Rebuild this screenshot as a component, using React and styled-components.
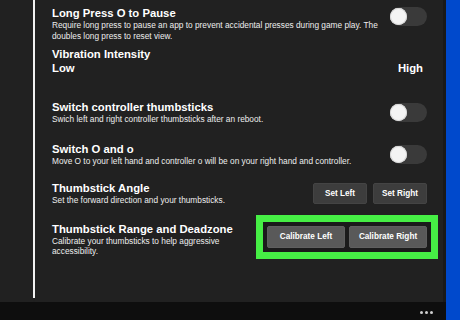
import React from 'react'
import styled, { createGlobalStyle } from 'styled-components'

const Global = createGlobalStyle`
    html, body {
        margin: 0;
        padding: 0;
        background: #202020;
    }
    body {
        font-family: "Liberation Sans", Arial, sans-serif;
        color: #fff;
    }
`

const Screen = styled.div`
    width: 460px;
    height: 320px;
    display: flex;
    overflow: hidden;
`

const Main = styled.div`
    flex: 1;
    display: flex;
    flex-direction: column;
`

const Body = styled.div`
    flex: 1;
    display: flex;
    min-height: 0;
`

const Gutter = styled.div`
    width: 33px;
    background: #212121;
`

const Rule = styled.div`
    width: 2px;
    margin-bottom: 4px;
    background: #f2f2f2;
`

const Panel = styled.div`
    flex: 1;
    background: #212121;
    padding: 0 16px 0 17px;
    display: flex;
    flex-direction: column;
`

const Edge = styled.div`
    width: 3px;
    background: #191919;
`

const BottomBar = styled.div`
    height: 18px;
    background: #0e0e0e;
    display: flex;
    justify-content: flex-end;
    align-items: center;
    gap: 2px;
    padding: 3px 13px 0 0;
    box-sizing: border-box;
`

const Dot = styled.span`
    width: 3px;
    height: 3px;
    border-radius: 50%;
    background: #cfcfcf;
`

const Blue = styled.div`
    width: 14px;
    background: #0049cc;
`

const Row = styled.div`
    display: flex;
    justify-content: space-between;
    align-items: ${p => p.align || 'center'};
    margin-top: ${p => p.top}px;
`

const Text = styled.div`
    display: flex;
    flex-direction: column;
    margin-top: ${p => p.offset || 0}px;
`

const Title = styled.div`
    font-size: 11.3px;
    font-weight: 700;
    line-height: 13px;
`

const Desc = styled.div`
    font-size: 8.3px;
    line-height: 10.5px;
    color: #eeeeee;
    max-width: ${p => p.max || 'none'};
`

const Level = styled.div`
    display: flex;
    justify-content: space-between;
    margin-top: 1px;
    padding-right: 4px;
    font-size: 11.3px;
    font-weight: 700;
    line-height: 13px;
`

const Toggle = styled.div`
    width: 37px;
    height: 19px;
    border-radius: 10px;
    background: #3a3a3a;
    display: flex;
    align-items: center;
    flex-shrink: 0;
    margin-left: 12px;
    &::before {
        content: '';
        width: 17px;
        height: 17px;
        border-radius: 50%;
        background: #f4f4f4;
        box-shadow: 0 0 0 1px #d8d8d8 inset;
    }
`

const Buttons = styled.div`
    display: flex;
    gap: ${p => p.gap}px;
    flex-shrink: 0;
`

const Button = styled.div`
    width: ${p => p.w}px;
    height: ${p => p.h}px;
    background: ${p => p.bg};
    border: 1px solid ${p => p.line};
    box-sizing: border-box;
    border-radius: 2px;
    display: flex;
    align-items: center;
    justify-content: center;
    font-size: 8.2px;
    font-weight: 700;
    color: #fff;
`

const Highlight = styled.div`
    border: 7px solid #46ef45;
    background: #1b1b1b;
    padding: 4px;
    margin-right: -11px;
    flex-shrink: 0;
`

const App = () => {
    return (
        <>
            <Global />
            <Screen>
                <Main>
                    <Body>
                        <Gutter />
                        <Rule />
                        <Panel>
                            <Row top={7} align='flex-start'>
                                <Text>
                                    <Title>Long Press O to Pause</Title>
                                    <Desc>Require long press to pause an app to prevent accidental presses during game play. The<br />doubles long press to reset view.</Desc>
                                </Text>
                                <Toggle />
                            </Row>

                            <Row top={7} align='stretch'>
                                <Text style={{ flex: 1 }}>
                                    <Title>Vibration Intensity</Title>
                                    <Level>
                                        <span>Low</span>
                                        <span>High</span>
                                    </Level>
                                </Text>
                            </Row>

                            <Row top={26}>
                                <Text>
                                    <Title>Switch controller thumbsticks</Title>
                                    <Desc>Swich left and right controller thumbsticks after an reboot.</Desc>
                                </Text>
                                <Toggle />
                            </Row>

                            <Row top={18}>
                                <Text>
                                    <Title>Switch O and o</Title>
                                    <Desc>Move O to your left hand and controller o will be on your right hand and controller.</Desc>
                                </Text>
                                <Toggle />
                            </Row>

                            <Row top={16}>
                                <Text>
                                    <Title>Thumbstick Angle</Title>
                                    <Desc>Set the forward direction and your thumbsticks.</Desc>
                                </Text>
                                <Buttons gap={6}>
                                    <Button w={54} h={21} bg='#3d3d3d' line='#444'>Set Left</Button>
                                    <Button w={54} h={21} bg='#3d3d3d' line='#444'>Set Right</Button>
                                </Buttons>
                            </Row>

                            <Row top={9} align='flex-start'>
                                <Text offset={8}>
                                    <Title>Thumbstick Range and Deadzone</Title>
                                    <Desc max='185px'>Calibrate your thumbsticks to help aggressive accessibility.</Desc>
                                </Text>
                                <Highlight>
                                    <Buttons gap={4}>
                                        <Button w={78} h={22} bg='#595959' line='#5f5f5f'>Calibrate Left</Button>
                                        <Button w={78} h={22} bg='#595959' line='#5f5f5f'>Calibrate Right</Button>
                                    </Buttons>
                                </Highlight>
                            </Row>
                        </Panel>
                        <Edge />
                    </Body>
                    <BottomBar>
                        <Dot />
                        <Dot />
                        <Dot />
                    </BottomBar>
                </Main>
                <Blue />
            </Screen>
        </>
    )
}

export default App
